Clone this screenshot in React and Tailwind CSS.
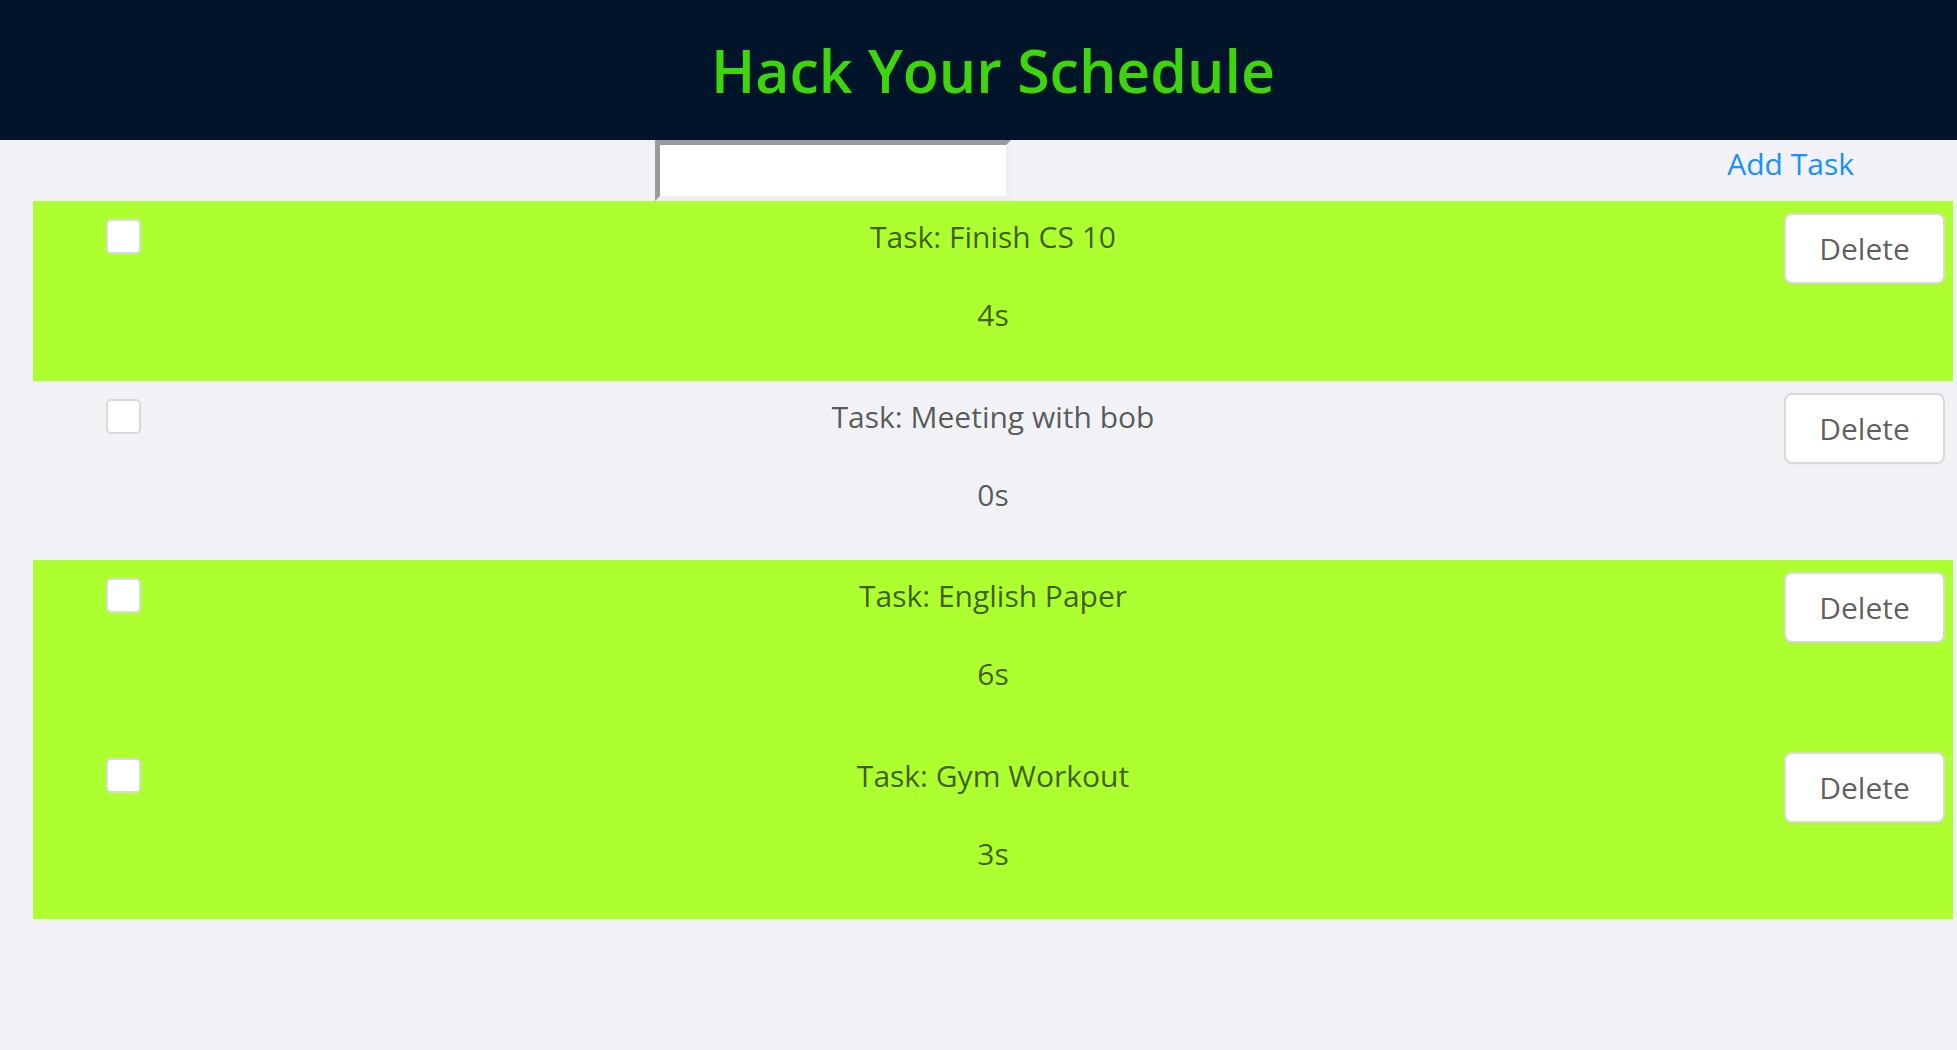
const tasks = [
  { name: "Finish CS 10", time: "4s", done: true },
  { name: "Meeting with bob", time: "0s", done: false },
  { name: "English Paper", time: "6s", done: true },
  { name: "Gym Workout", time: "3s", done: true },
];

function TaskRow({ task }) {
  return (
    <div
      className={`grid h-[179.5px] grid-cols-[1fr_auto_1fr] ${
        task.done ? "bg-[#adff2f]" : "bg-transparent"
      }`}
    >
      <div>
        <div className="ml-[73px] mt-[18px] h-[35px] w-[35px] rounded-[5px] border-2 border-[#d9d9d9] bg-white" />
      </div>
      <div className="flex flex-col items-center text-[30px] text-black/65">
        <p className="mt-[14px] leading-[44px]">Task: {task.name}</p>
        <p className="mt-[34px] leading-[44px]">{task.time}</p>
      </div>
      <div className="flex justify-end">
        <button className="mr-[8px] mt-[12px] h-[71px] w-[161px] rounded-[8px] border-2 border-[#d9d9d9] bg-white text-[30px] text-black/65 shadow-[0_2px_0_rgba(0,0,0,0.015)]">
          Delete
        </button>
      </div>
    </div>
  );
}

export default function App() {
  return (
    <div className="min-h-[1050px] bg-[#f0f2f5] font-['Open_Sans',sans-serif]">
      {/* Header */}
      <header className="h-[140px] bg-[#001529]">
        <div className="ml-[33px] flex h-full w-[1920px] items-center justify-center">
          <h1 className="text-[59px] font-semibold leading-none text-[#3ed50e]">
            Hack Your Schedule
          </h1>
        </div>
      </header>

      {/* Add task bar */}
      <div className="flex h-[61px] items-center">
        <input
          type="text"
          className="ml-[655px] h-[61px] w-[356px] border-[5px] border-b-[#eeeeee] border-l-[#9a9a9a] border-r-[#eeeeee] border-t-[#9a9a9a] bg-white outline-none"
        />
        <button className="ml-auto mr-[103px] mb-[14px] text-[30px] text-[#1890ff]">
          Add Task
        </button>
      </div>

      {/* Tasks */}
      <div className="ml-[33px] w-[1920px]">
        {tasks.map((t) => (
          <TaskRow key={t.name} task={t} />
        ))}
      </div>
    </div>
  );
}
